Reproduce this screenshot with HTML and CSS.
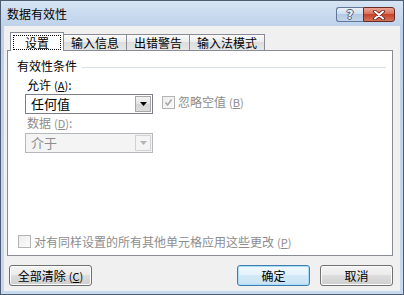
FILE: index.html
```html
<!DOCTYPE html>
<html lang="zh-CN">
<head>
    <meta charset="UTF-8">
    <title>数据有效性</title>
    <link rel="stylesheet" href="styles.css">
</head>
<body>
    <div class="window">
        <div class="titlebar">
            <span class="title">数据有效性</span>
            <div class="caption-buttons">
                <span class="cap-btn help">?</span>
                <span class="cap-btn close">
                    <svg width="12" height="10" viewBox="0 0 12 10">
                        <path d="M2 1.5 L10 8.5 M10 1.5 L2 8.5" stroke="#5b1b12" stroke-width="3.6" stroke-linecap="round"/>
                        <path d="M2 1.5 L10 8.5 M10 1.5 L2 8.5" stroke="#ffffff" stroke-width="2" stroke-linecap="round"/>
                    </svg>
                </span>
            </div>
        </div>

        <div class="client">
            <div class="tabs">
                <span class="tab active"><span class="focus">设置</span></span>
                <span class="tab">输入信息</span>
                <span class="tab">出错警告</span>
                <span class="tab">输入法模式</span>
            </div>

            <div class="panel">
                <div class="group-title">
                    <span>有效性条件</span>
                    <span class="rule"></span>
                </div>

                <div class="fields">
                    <div class="label">允许<span class="acc">(<u>A</u>)</span>:</div>
                    <div class="row">
                        <div class="combo">
                            <span class="combo-text">任何值</span>
                            <span class="combo-btn">
                                <svg width="7" height="4" viewBox="0 0 7 4"><polygon points="0,0 7,0 3.5,4" fill="#000"/></svg>
                            </span>
                        </div>
                        <div class="check disabled">
                            <span class="box">
                                <svg width="9" height="9" viewBox="0 0 9 9"><path d="M1.5 4.5 L3.6 7 L7.6 1.5" fill="none" stroke="#a8a8a8" stroke-width="1.6"/></svg>
                            </span>
                            <span>忽略空值<span class="acc">(<u>B</u>)</span></span>
                        </div>
                    </div>

                    <div class="label disabled">数据<span class="acc">(<u>D</u>)</span>:</div>
                    <div class="combo disabled">
                        <span class="combo-text">介于</span>
                        <span class="combo-btn">
                            <svg width="7" height="4" viewBox="0 0 7 4"><polygon points="0,0 7,0 3.5,4" fill="#b4b4b4"/></svg>
                        </span>
                    </div>
                </div>

                <div class="check disabled bottom-check">
                    <span class="box"></span>
                    <span>对有同样设置的所有其他单元格应用这些更改<span class="acc">(<u>P</u>)</span></span>
                </div>
            </div>

            <div class="footer">
                <span class="button clear">全部清除<span class="acc">(<u>C</u>)</span></span>
                <span class="button default">确定</span>
                <span class="button">取消</span>
            </div>
        </div>
    </div>
</body>
</html>
```

FILE: styles.css
```css
* {
    box-sizing: border-box;
}

body {
    margin: 0;
    font-family: "Noto Sans CJK SC", "Liberation Sans", sans-serif;
    font-size: 12px;
    color: #000;
}

.window {
    width: 404px;
    height: 295px;
    border: 1px solid #4e5d72;
    background: linear-gradient(#d6e4f4, #bdd1ea 26px, #c7d9ee);
    display: flex;
    flex-direction: column;
}

/* title bar */
.titlebar {
    height: 25px;
    display: flex;
    align-items: center;
    padding: 0 8px 0 6px;
}

.title {
    flex: 1;
    line-height: 14px;
}

.caption-buttons {
    display: flex;
    align-self: flex-start;
    margin-top: 6px;
}

.cap-btn {
    height: 15px;
    display: flex;
    align-items: center;
    justify-content: center;
}

.help {
    width: 27px;
    border: 1px solid #61779a;
    border-right: none;
    border-radius: 3px 0 0 3px;
    background: linear-gradient(#e9f0f8, #cddbec 50%, #b6c9e2 50%, #c3d5eb);
    font-family: "DejaVu Sans", sans-serif;
    font-weight: bold;
    font-size: 12px;
    color: #eef2f8;
    text-shadow: 1px 0 #4a5c78, -1px 0 #4a5c78, 0 1px #4a5c78, 0 -1px #4a5c78;
}

.close {
    width: 32px;
    border: 1px solid #6a2a24;
    border-radius: 0 3px 3px 0;
    background: linear-gradient(#eba596, #d8694f 50%, #c44429 50%, #d37359);
}

/* client area */
.client {
    flex: 1;
    margin: 0 3px 3px 3px;
    background: #f0f0f0;
    display: flex;
    flex-direction: column;
    padding: 6px 7px 5px 3px;
}

.tabs {
    display: flex;
    align-items: flex-end;
    height: 18px;
    padding-left: 3px;
}

.tab {
    height: 16px;
    padding: 0 7px;
    border: 1px solid #898c95;
    border-bottom: none;
    border-left: none;
    background: linear-gradient(#fafafa, #ebebeb 50%, #dedede 50%, #e6e6e6);
    line-height: 15px;
    white-space: nowrap;
}

.tab.active {
    position: relative;
    z-index: 1;
    height: 19px;
    margin-bottom: -1px;
    padding: 0 2px;
    border-left: 1px solid #898c95;
    background: #fff;
    display: flex;
    align-items: flex-start;
}

.focus {
    margin-top: 2px;
    padding: 0 11px;
    border: 1px dotted #000;
    line-height: 13px;
}

.panel {
    flex: 1;
    border: 1px solid #898c95;
    background: #fff;
    padding: 8px 6px 7px 9px;
    display: flex;
    flex-direction: column;
}

.group-title {
    display: flex;
    align-items: center;
    line-height: 14px;
    height: 14px;
}

.rule {
    flex: 1;
    margin-left: 5px;
    margin-top: 2px;
    border-top: 1px solid #d5dfe5;
}

.fields {
    margin-left: 8px;
    display: flex;
    flex-direction: column;
    align-items: flex-start;
}

.label {
    margin-top: 5px;
    padding-left: 2px;
    line-height: 14px;
    height: 14px;
}

.label.disabled {
    margin-top: 2px;
    color: #8d8d8d;
}

/* accelerator key, e.g. (A) */
.acc {
    margin-left: 3px;
    font-size: 11px;
}

.row {
    display: flex;
    align-items: flex-start;
    margin-top: 2px;
}

.combo {
    width: 128px;
    height: 20px;
    border: 1px solid #7c7f86;
    background: #fff;
    display: flex;
    align-items: stretch;
}

.combo.disabled {
    margin-top: 3px;
    border-color: #b4b8bc;
    background: #f4f4f4;
    color: #8d8d8d;
}

.combo-text {
    flex: 1;
    padding-left: 5px;
    font-size: 13px;
    line-height: 18px;
}

.combo-btn {
    width: 16px;
    margin: 1px;
    border: 1px solid #a7a7a7;
    background: linear-gradient(#f3f3f3, #e4e4e4 50%, #d4d4d4 50%, #dcdcdc);
    display: flex;
    align-items: center;
    justify-content: center;
}

.combo.disabled .combo-btn {
    border-color: #d2d2d2;
    background: #f4f4f4;
}

.check {
    display: flex;
    align-items: center;
    line-height: 13px;
    white-space: nowrap;
}

.check.disabled {
    color: #8d8d8d;
}

.row .check {
    margin-left: 9px;
    margin-top: 1px;
}

.box {
    width: 13px;
    height: 13px;
    margin-right: 3px;
    border: 1px solid #b4b4b4;
    background: linear-gradient(135deg, #ececec, #fbfbfb);
    display: flex;
    align-items: center;
    justify-content: center;
}

.bottom-check {
    margin-top: auto;
    margin-left: 1px;
    height: 13px;
}

/* buttons */
.footer {
    margin-top: 9px;
    display: flex;
    gap: 10px;
}

.button {
    width: 73px;
    height: 21px;
    border: 1px solid #707070;
    border-radius: 3px;
    background: linear-gradient(#f3f3f3, #ebebeb 50%, #dddddd 50%, #cfcfcf);
    box-shadow: inset 0 0 0 1px #fcfcfc;
    display: flex;
    align-items: center;
    justify-content: center;
    line-height: 14px;
}

.button.clear {
    width: 83px;
    margin-left: 2px;
    margin-right: auto;
}

.button.default {
    border-color: #3c7fb1;
    background: linear-gradient(#f1f8fd, #e3f2fc 50%, #d3e9f7 50%, #c9e2f3);
    box-shadow: inset 0 0 0 1px #a9dbf6;
}
```
